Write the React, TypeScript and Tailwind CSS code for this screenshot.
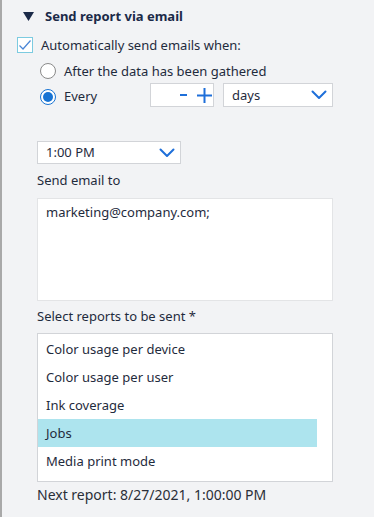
import React from "react";

const Chevron = () => (
  <svg width="16" height="10" viewBox="0 0 16 10" fill="none">
    <path d="M1.5 1.5 L8 8 L14.5 1.5" stroke="#1e6fd9" strokeWidth="2" strokeLinecap="round" strokeLinejoin="round" />
  </svg>
);

export default function App() {
  const items = ["Color usage per device", "Color usage per user", "Ink coverage", "Jobs", "Media print mode"];
  return (
    <div
      className="w-[374px] h-[517px] bg-[#f2f3f5] border-l-2 border-[#a9a9a9] text-[13px] text-[#1f2b3d] overflow-hidden"
      style={{ fontFamily: '"Noto Sans", "Open Sans", sans-serif' }}
    >
      {/* header */}
      <div className="flex items-center h-[17px] mt-[8px] pl-[21px]">
        <svg width="11" height="9" viewBox="0 0 11 9">
          <polygon points="0,0 11,0 5.5,9" fill="#1b2a48" />
        </svg>
        <span className="ml-[11px] font-bold text-[#1b2a48] leading-none">Send report via email</span>
      </div>

      {/* checkbox */}
      <div className="flex items-center h-[16px] mt-[12px] pl-[15px]">
        <div className="w-[16px] h-[16px] border border-[#7ccbe0] bg-white flex items-center justify-center">
          <svg width="14" height="12" viewBox="0 0 14 12" fill="none">
            <path d="M1.5 6.5 L5 10 L12.5 1.5" stroke="#4a86d6" strokeWidth="1.2" />
          </svg>
        </div>
        <span className="ml-[8px] leading-none">Automatically send emails when:</span>
      </div>

      {/* radio 1 */}
      <div className="flex items-center h-[16px] mt-[10px] pl-[38px]">
        <div className="w-[16px] h-[16px] rounded-full border border-[#8a8a8a] bg-white" />
        <span className="ml-[8px] leading-none">After the data has been gathered</span>
      </div>

      {/* radio 2 row */}
      <div className="flex items-center h-[24px] mt-[4px] pl-[38px]">
        <div className="w-[16px] h-[16px] mt-[3px] rounded-full border border-[#1873d3] bg-white flex items-center justify-center">
          <div className="w-[10px] h-[10px] rounded-full bg-[#1873d3]" />
        </div>
        <span className="ml-[8px] mt-[3px] leading-none w-[86px]">Every</span>
        <div className="w-[64px] h-[24px] bg-white border border-[#d2d4d8] flex items-center justify-end pr-[1px] gap-[10px]">
          <svg width="7" height="14" viewBox="0 0 7 14">
            <rect x="0" y="6" width="7" height="2" fill="#1e6fd9" />
          </svg>
          <svg width="15" height="15" viewBox="0 0 15 15">
            <rect x="0" y="6.5" width="15" height="2" fill="#1e6fd9" />
            <rect x="6.5" y="0" width="2" height="15" fill="#1e6fd9" />
          </svg>
        </div>
        <div className="ml-[9px] w-[110px] h-[24px] bg-white border border-[#d2d4d8] flex items-center justify-between pl-[8px] pr-[5px]">
          <span className="leading-none">days</span>
          <Chevron />
        </div>
      </div>

      {/* time select */}
      <div className="ml-[35px] mt-[34px] w-[144px] h-[23px] bg-white border border-[#d2d4d8] flex items-center justify-between pl-[8px] pr-[5px]">
        <span className="leading-none">1:00 PM</span>
        <Chevron />
      </div>

      <div className="ml-[35px] mt-[10px] leading-none h-[14px]">Send email to</div>

      <div className="ml-[35px] mt-[10px] w-[296px] h-[103px] bg-white border border-[#e3e4e6] px-[8px] pt-[4px]">
        <span className="leading-none">marketing@company.com;</span>
      </div>

      <div className="ml-[35px] mt-[9px] leading-none h-[14px]">Select reports to be sent *</div>

      <div className="ml-[35px] mt-[9px] w-[296px] h-[149px] bg-white border border-[#d2d4d8] pt-[1px]">
        {items.map((it) => (
          <div
            key={it}
            className={
              "h-[28px] w-[279px] flex items-center pl-[8px] " + (it === "Jobs" ? "bg-[#ade4ee]" : "")
            }
          >
            <span className="leading-none">{it}</span>
          </div>
        ))}
      </div>

      <div className="ml-[35px] mt-[6px] text-[14px] text-[#2a2f38] leading-none">Next report: 8/27/2021, 1:00:00 PM</div>
    </div>
  );
}
